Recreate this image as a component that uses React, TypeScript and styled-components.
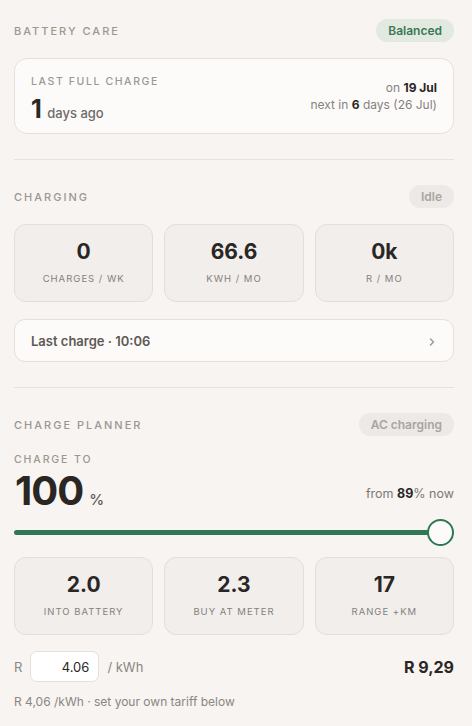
import React from "react";
import styled, { createGlobalStyle } from "styled-components";

const GlobalStyle = createGlobalStyle`
  html, body {
    margin: 0;
    padding: 0;
    background: #f7f4f1;
  }
  body {
    font-family: Inter, "Noto Sans", sans-serif;
    color: #222;
  }
  * { box-sizing: border-box; }
`;

const chargingStats = [
  { value: "0", label: "Charges / wk" },
  { value: "66.6", label: "kWh / mo" },
  { value: "0k", label: "R / mo" },
];

const plannerStats = [
  { value: "2.0", label: "Into battery" },
  { value: "2.3", label: "Buy at meter" },
  { value: "17", label: "Range +km" },
];

const App = () => {
  return (
    <Page>
      <GlobalStyle />
      <Section>
        <SectionHead>
          <SectionTitle>Battery care</SectionTitle>
          <Pill $tone="green">Balanced</Pill>
        </SectionHead>
        <InfoCard>
          <div>
            <SmallLabel>Last full charge</SmallLabel>
            <BigLine>
              <b>1</b> days ago
            </BigLine>
          </div>
          <RightInfo>
            <span>
              on <b>19 Jul</b>
            </span>
            <span>
              next in <b>6</b> days (26 Jul)
            </span>
          </RightInfo>
        </InfoCard>
      </Section>

      <Divider />

      <Section>
        <SectionHead>
          <SectionTitle>Charging</SectionTitle>
          <Pill $tone="grey">Idle</Pill>
        </SectionHead>
        <StatGrid>
          {chargingStats.map((s) => (
            <StatCard key={s.label}>
              <StatValue>{s.value}</StatValue>
              <StatLabel>{s.label}</StatLabel>
            </StatCard>
          ))}
        </StatGrid>
        <RowButton>
          <span>Last charge · 10:06</span>
          <Chevron viewBox="0 0 10 10">
            <path d="M3.5 2 L6.5 5 L3.5 8" />
          </Chevron>
        </RowButton>
      </Section>

      <Divider />

      <Section>
        <SectionHead>
          <SectionTitle>Charge planner</SectionTitle>
          <Pill $tone="grey">AC charging</Pill>
        </SectionHead>
        <SmallLabel $planner>Charge to</SmallLabel>
        <TargetRow>
          <Target>
            100<small>%</small>
          </Target>
          <FromNow>
            from <b>89</b>% now
          </FromNow>
        </TargetRow>
        <Slider>
          <Track />
          <Thumb />
        </Slider>
        <StatGrid>
          {plannerStats.map((s) => (
            <StatCard key={s.label}>
              <StatValue>{s.value}</StatValue>
              <StatLabel>{s.label}</StatLabel>
            </StatCard>
          ))}
        </StatGrid>
        <TariffRow>
          <TariffInput>
            <span>R</span>
            <Input defaultValue="4.06" />
            <span>/ kWh</span>
          </TariffInput>
          <Total>R 9,29</Total>
        </TariffRow>
        <Note>R 4,06 /kWh · set your own tariff below</Note>
      </Section>
    </Page>
  );
};

export default App;

const Page = styled.div`
  width: 472px;
  padding: 19px 18px 0 14px;
  display: flex;
  flex-direction: column;
`;

const Section = styled.section`
  display: flex;
  flex-direction: column;
`;

const SectionHead = styled.div`
  display: flex;
  align-items: center;
  justify-content: space-between;
  height: 23px;
  margin-bottom: 16px;
`;

const SectionTitle = styled.h3`
  margin: 0;
  font-size: 11px;
  font-weight: 500;
  letter-spacing: 2px;
  text-transform: uppercase;
  color: #9b9793;
`;

const Pill = styled.span<{ $tone: "green" | "grey" }>`
  height: 23px;
  padding: 0 12px;
  border-radius: 12px;
  display: inline-flex;
  align-items: center;
  font-size: 12px;
  font-weight: 600;
  background: ${(p) => (p.$tone === "green" ? "#e2e9e1" : "#ece9e6")};
  color: ${(p) => (p.$tone === "green" ? "#3a7852" : "#a9a5a1")};
`;

const InfoCard = styled.div`
  height: 76px;
  padding: 17px 16px 0;
  background: #fdfbfa;
  border: 1px solid #e5e0dc;
  border-radius: 13px;
  display: flex;
  align-items: flex-start;
  justify-content: space-between;
`;

const SmallLabel = styled.div<{ $planner?: boolean }>`
  font-size: 10.5px;
  line-height: 12px;
  font-weight: 500;
  letter-spacing: ${(p) => (p.$planner ? "1.9px" : "1.6px")};
  text-transform: uppercase;
  color: #9b9793;
  margin-top: ${(p) => (p.$planner ? "2px" : "0")};
  margin-bottom: ${(p) => (p.$planner ? "2px" : "6px")};
`;

const BigLine = styled.div`
  font-size: 13px;
  font-weight: 500;
  color: #6f6b67;
  b {
    font-size: 25px;
    font-weight: 700;
    color: #2a2624;
    margin-right: 2px;
  }
`;

const RightInfo = styled.div`
  display: flex;
  flex-direction: column;
  align-items: flex-end;
  gap: 3px;
  margin-top: 5px;
  font-size: 12px;
  line-height: 14px;
  color: #85817d;
  b {
    font-weight: 700;
    color: #2a2624;
  }
`;

const Divider = styled.hr`
  margin: 25px 0 25px;
  border: none;
  border-top: 1px solid #e6e1dd;
`;

const StatGrid = styled.div`
  display: grid;
  grid-template-columns: repeat(3, 1fr);
  gap: 11px;
`;

const StatCard = styled.div`
  height: 78px;
  background: #f1eeec;
  border: 1px solid #e3dedb;
  border-radius: 12px;
  display: flex;
  flex-direction: column;
  align-items: center;
  justify-content: center;
  gap: 11px;
`;

const StatValue = styled.div`
  font-size: 21px;
  font-weight: 700;
  color: #2a2624;
  line-height: 21px;
`;

const StatLabel = styled.div`
  font-size: 9.5px;
  line-height: 12px;
  font-weight: 400;
  letter-spacing: 1px;
  text-transform: uppercase;
  color: #85817d;
`;

const RowButton = styled.div`
  margin-top: 17px;
  height: 43px;
  padding: 0 16px;
  background: #fdfbfa;
  border: 1px solid #e5e0dc;
  border-radius: 11px;
  display: flex;
  align-items: center;
  justify-content: space-between;
  font-size: 13px;
  font-weight: 600;
  color: #5d5955;
`;

const Chevron = styled.svg`
  width: 10px;
  height: 10px;
  margin-top: 3px;
  path {
    fill: none;
    stroke: #a09c98;
    stroke-width: 1.6;
    stroke-linecap: round;
    stroke-linejoin: round;
  }
`;

const TargetRow = styled.div`
  display: flex;
  align-items: baseline;
  justify-content: space-between;
  margin-top: -2px;
`;

const Target = styled.div`
  font-size: 40px;
  font-weight: 700;
  letter-spacing: -1px;
  color: #2a2624;
  padding-left: 1px;
  small {
    font-size: 15px;
    font-weight: 500;
    letter-spacing: 0;
    margin-left: 6px;
    color: #5d5955;
  }
`;

const FromNow = styled.div`
  font-size: 12.5px;
  color: #7d7975;
  transform: translateY(-7px);
  b {
    font-weight: 700;
    color: #2a2624;
  }
`;

const Slider = styled.div`
  position: relative;
  height: 26px;
  margin: 4px 0 12px;
  display: flex;
  align-items: center;
`;

const Track = styled.div`
  height: 5px;
  width: calc(100% - 14px);
  border-radius: 3px;
  background: #2f7853;
`;

const Thumb = styled.div`
  position: absolute;
  right: 0;
  top: 0;
  width: 27px;
  height: 27px;
  border-radius: 50%;
  background: #fdfbfa;
  border: 2px solid #2f7853;
`;

const TariffRow = styled.div`
  margin-top: 16px;
  display: flex;
  align-items: center;
  justify-content: space-between;
`;

const TariffInput = styled.label`
  display: flex;
  align-items: center;
  gap: 8px;
  font-size: 13px;
  color: #8a8682;
`;

const Input = styled.input`
  width: 69px;
  height: 31px;
  padding: 0 9px;
  border: 1px solid #e5e0dc;
  border-radius: 7px;
  background: #fff;
  font-family: inherit;
  font-size: 13px;
  color: #2a2624;
  text-align: right;
  outline: none;
`;

const Total = styled.div`
  font-size: 16px;
  font-weight: 700;
  color: #2a2624;
`;

const Note = styled.div`
  margin-top: 12px;
  font-size: 12px;
  color: #8a8682;
`;
